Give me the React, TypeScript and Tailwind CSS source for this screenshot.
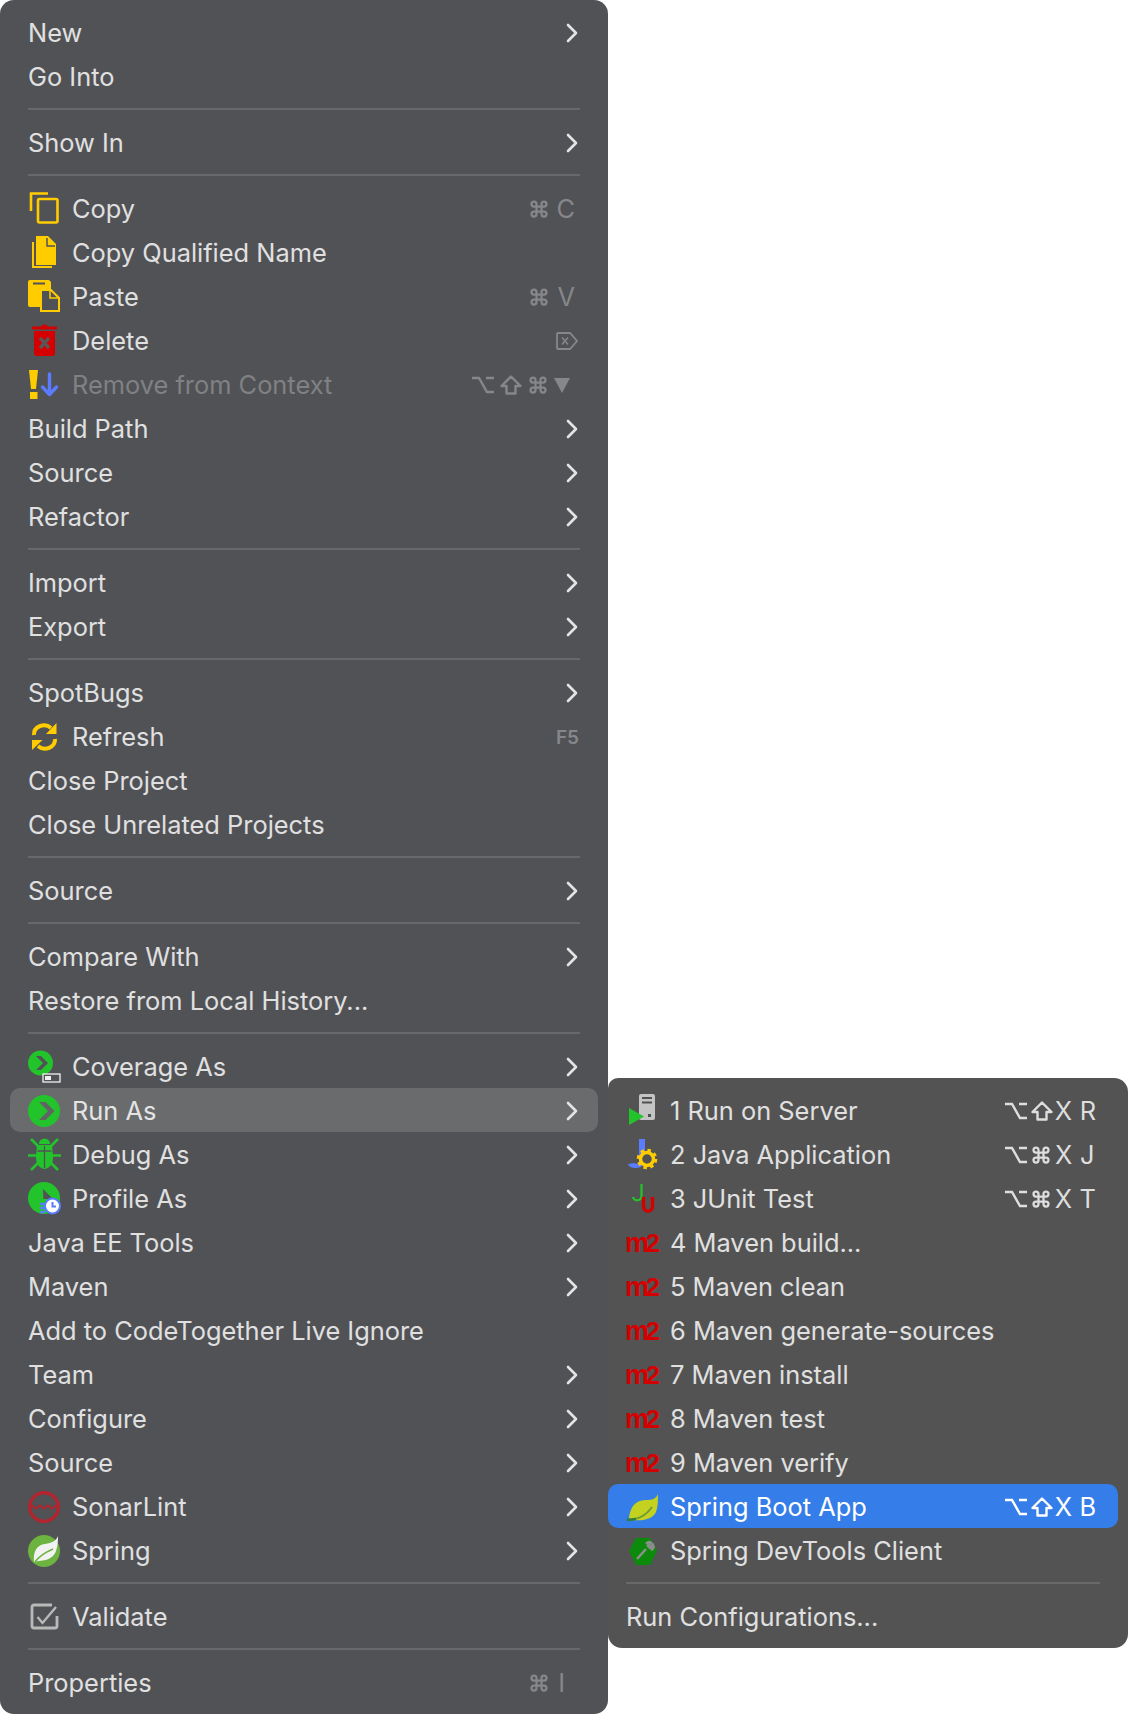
import React from "react";

type Item = {
  label: string;
  icon?: React.ReactNode;
  arrow?: boolean;
  keys?: React.ReactNode;
  disabled?: boolean;
  state?: "open" | "selected";
};

const Icon = ({ children }: { children: React.ReactNode }) => (
  <svg width="36" height="36" viewBox="0 0 36 36" className="shrink-0 overflow-visible">
    {children}
  </svg>
);

const Opt = () => (
  <svg width="22" height="20" viewBox="0 0 22 20" fill="none" stroke="currentColor" strokeWidth="2.4" className="shrink-0">
    <path d="M0 3h7l8 14h7M14 3h8" />
  </svg>
);
const Shift = () => (
  <svg width="22" height="20" viewBox="0 0 22 20" fill="none" stroke="currentColor" strokeWidth="2.4" strokeLinejoin="round" className="shrink-0">
    <path d="M11 1.500 20.500 11H15.500v7.500h-9V11H1.500Z" />
  </svg>
);
const Cmd = () => (
  <svg width="20" height="20" viewBox="0 0 24 24" fill="none" stroke="currentColor" strokeWidth="2.7" className="shrink-0">
    <path d="M15 6v12a3 3 0 1 0 3-3H6a3 3 0 1 0 3 3V6a3 3 0 1 0-3 3h12a3 3 0 1 0-3-3" />
  </svg>
);

const Chevron = () => (
  <svg width="12" height="20" viewBox="0 0 12 20" fill="none" stroke="currentColor" strokeWidth="2.6" strokeLinecap="round" strokeLinejoin="round" className="ml-auto shrink-0 text-[#e4e4e4]">
    <path d="M2 2l8 8-8 8" />
  </svg>
);

const CopyIcon = () => (
  <Icon>
    <g fill="none" stroke="#ffcc00" strokeWidth="2.6">
      <path d="M3 20V2.500h17" />
      <rect x="10" y="8" width="19.500" height="23.500" rx="1.500" />
    </g>
  </Icon>
);
const QualifiedIcon = () => (
  <Icon>
    <path d="M5 7v25h19" fill="none" stroke="#ffcc00" strokeWidth="2" />
    <path d="M8 1h12l8 8v21H8Z" fill="#ffcc00" />
    <path d="M19 3v8h8" fill="none" stroke="#515256" strokeWidth="1.500" />
  </Icon>
);
const PasteIcon = () => (
  <Icon>
    <path d="M2 1h19l2 2v25H2a2 2 0 0 1-2-2V3a2 2 0 0 1 2-2Z" fill="#ffcc00" />
    <path d="M5 4.500h12" stroke="#515256" strokeWidth="2" />
    <path d="M13 11h10l8 8v13H13Z" fill="#515256" stroke="#ffcc00" strokeWidth="2" />
    <path d="M22 11v8h9" fill="none" stroke="#ffcc00" strokeWidth="1.500" />
  </Icon>
);
const DeleteIcon = () => (
  <Icon>
    <path d="M4 3.500h9l2-2h3l2 2h9v3H4Z" fill="#d40000" />
    <path d="M6 8h21v22a3 3 0 0 1-3 3H9a3 3 0 0 1-3-3Z" fill="#d40000" />
    <path d="M12 15l9 10M21 15l-9 10" stroke="#5d5457" strokeWidth="3.400" />
  </Icon>
);
const RemoveIcon = () => (
  <Icon>
    <path d="M1 3h9l-2 19H3Z" fill="#ffcc00" />
    <rect x="2" y="25" width="7.500" height="7" fill="#ffcc00" />
    <path d="M21.500 7v20M14.500 20l7 7.500 7-7.500" fill="none" stroke="#5b7cff" strokeWidth="3.400" strokeLinecap="round" strokeLinejoin="round" />
  </Icon>
);
const RefreshIcon = () => (
  <Icon>
    <g fill="none" stroke="#ffcc00" strokeWidth="4">
      <path d="M6 16a10 9 0 0 1 17-7" />
      <path d="M27 20a10 9 0 0 1-17 7" />
    </g>
    <path d="M28.500 4v11H18Z" fill="#ffcc00" />
    <path d="M4 31V21h10.500Z" fill="#ffcc00" />
  </Icon>
);
const CoverageIcon = () => (
  <Icon>
    <circle cx="12.500" cy="14" r="12.500" fill="#23c42b" />
    <path d="M8 7h5l7 7-7 7H8l7-7Z" fill="#515256" />
    <rect x="15" y="25" width="17" height="8" fill="#515256" stroke="#fff" strokeWidth="1.200" />
    <rect x="17" y="27" width="6" height="4" fill="#f0f0f0" />
  </Icon>
);
const RunIcon = () => (
  <Icon>
    <circle cx="16" cy="18" r="16" fill="#23c42b" />
    <path d="M11 9h6.500l9 9-9 9H11l9-9Z" fill="#626365" />
  </Icon>
);
const DebugIcon = () => (
  <Icon>
    <path d="M11 7a5.500 5.500 0 0 1 11 0Z" fill="#23c42b" />
    <path d="M9 8h15l1 12c0 7-3 11-8.500 12C11 31 8 27 8 20Z" fill="#23c42b" />
    <path d="M16.500 9v22M9.500 14h14" stroke="#515256" strokeWidth="1.300" />
    <g stroke="#23c42b" strokeWidth="2.600" fill="none">
      <path d="M3 2l7 7M30 2l-7 7M0 18.500h9M33 18.500h-9M3 33l7-7M30 33l-7-7" />
    </g>
  </Icon>
);
const ProfileIcon = () => (
  <Icon>
    <circle cx="16" cy="17" r="16" fill="#23c42b" />
    <path d="M15 8l17 17-16 7Z" fill="#515256" />
    <rect x="12" y="18" width="8" height="14" fill="#23c42b" />
    <circle cx="24.500" cy="25" r="7.500" fill="#fff" stroke="#5b7cff" strokeWidth="2" />
    <path d="M24.500 21v4.500h3.500" stroke="#5b7cff" strokeWidth="2" fill="none" />
    <path d="M12 23h4M12 27h5M12 31h5" stroke="#5b7cff" strokeWidth="2.400" />
  </Icon>
);
const SonarIcon = () => (
  <Icon>
    <circle cx="16" cy="18" r="14.300" fill="none" stroke="#b3242e" strokeWidth="3.400" />
    <path d="M2 18q2-3 4 0t4 0 4 0 4 0 4 0 4 0 4 0" fill="none" stroke="#b3242e" strokeWidth="2" />
  </Icon>
);
const SpringIcon = () => (
  <Icon>
    <circle cx="16" cy="18" r="16" fill="#6db33f" />
    <path d="M30 3C28 8 24 10 17 11 9 12 5 18 6 29 12 27 24 29 28 18 30 12 30 7 30 3Z" fill="#f2f2f2" />
    <path d="M7 29c5-7 11-10 18-13" fill="none" stroke="#6db33f" strokeWidth="1.600" />
  </Icon>
);
const ValidateIcon = () => (
  <Icon>
    <path d="M24 6H6a2 2 0 0 0-2 2v19a2 2 0 0 0 2 2h21a2 2 0 0 0 2-2V17" fill="none" stroke="#b9b9b9" strokeWidth="2.800" />
    <path d="M9.500 18l5 6L28 8" fill="none" stroke="#b9b9b9" strokeWidth="2.400" />
  </Icon>
);
const ServerIcon = () => (
  <Icon>
    <rect x="13" y="1" width="16" height="26" rx="2" fill="#c4c4c4" />
    <path d="M16 5h10M16 9.500h10" stroke="#515151" strokeWidth="2" />
    <rect x="22" y="21" width="3" height="3" fill="#515151" />
    <path d="M3 15l15 8.500L3 32Z" fill="#23c42b" />
  </Icon>
);
const JavaIcon = () => (
  <Icon>
    <path d="M13 2h6v20c0 6-4 9-9 9-4 0-7-1-8-4l6-1c2 1 3 1 4 0 1-1 1-2 1-4Z" fill="#5b7cff" />
    <circle cx="21" cy="22" r="6.500" fill="#515151" stroke="#ffcc00" strokeWidth="3.500" />
    <circle cx="21" cy="22" r="9" fill="none" stroke="#ffcc00" strokeWidth="2.600" strokeDasharray="3.500 3.600" />
  </Icon>
);
const JUnitIcon = () => (
  <Icon>
    <path d="M15.500 3v12c0 5-7 6-8.500 1" fill="none" stroke="#23c42b" strokeWidth="2.200" />
    <path d="M17.500 16v9c0 7 9 7 9 0v-9" fill="none" stroke="#d40000" strokeWidth="3.400" />
  </Icon>
);
const M2 = () => (
  <span className="flex w-[36px] shrink-0 -translate-x-[1px] items-baseline font-['Liberation_Sans',sans-serif] font-bold leading-none text-[#d40000]">
    <span className="text-[27px] tracking-[-1px]">m</span>
    <span className="-ml-[2px] text-[25px]">2</span>
  </span>
);
const BootIcon = () => (
  <Icon>
    <path d="M32 5c-2 5-6 6-12 6C11 11 5 16 3 28c0 2 1 3 3 3 10 1 20 0 24-8 2-5 2-12 2-18Z" fill="#c3d11f" />
    <path d="M1 31c9 0 18-3 25-13" fill="none" stroke="#6d9a3a" strokeWidth="1.800" />
    <path d="M1 31l9-1" stroke="#2f7d3a" strokeWidth="2.400" />
  </Icon>
);
const DevToolsIcon = () => (
  <Icon>
    <path d="M10 5h14l7 13-7 14H10L3 18Z" fill="#0b8a0b" />
    <path d="M11 26l9-10M20 11c2-2 4-2 5-1l-3 3 2 2 3-3c1 2 0 4-2 5" fill="none" stroke="#8a8f8a" strokeWidth="2.600" />
  </Icon>
);

const cmdKey = (ch: string) => (
  <span className="flex w-[46px] items-center justify-between">
    <Cmd />
    <span>{ch}</span>
  </span>
);

const DeleteKey = () => (
  <svg width="22" height="18" viewBox="0 0 22 18" fill="none" stroke="currentColor" strokeWidth="1.800">
    <path d="M2 1h12l7 8-7 8H2a1 1 0 0 1-1-1V2a1 1 0 0 1 1-1Z" />
    <path d="M6 5.500l6 7M12 5.500l-6 7" strokeWidth="1.500" />
  </svg>
);

const Combo = ({ mid, ch }: { mid: "shift" | "cmd"; ch: string }) => (
  <span className="mr-[2px] flex w-[91px] items-center text-[#dedede]">
    <Opt />
    <span className="ml-[4px] w-[24px]">{mid === "shift" ? <Shift /> : <Cmd />}</span>
    <span className="w-[25px]">X</span>
    <span>{ch}</span>
  </span>
);

const main: (Item | "sep")[] = [
  { label: "New", arrow: true },
  { label: "Go Into" },
  "sep",
  { label: "Show In", arrow: true },
  "sep",
  { label: "Copy", icon: <CopyIcon />, keys: <span className="mr-[3px]">{cmdKey("C")}</span> },
  { label: "Copy Qualified Name", icon: <QualifiedIcon /> },
  { label: "Paste", icon: <PasteIcon />, keys: <span className="mr-[3px]">{cmdKey("V")}</span> },
  { label: "Delete", icon: <DeleteIcon />, keys: <DeleteKey /> },
  {
    label: "Remove from Context",
    icon: <RemoveIcon />,
    disabled: true,
    keys: (
      <span className="mr-[8px] flex items-center gap-[6px]">
        <Opt />
        <Shift />
        <Cmd />
        <svg width="16" height="16" viewBox="0 0 16 16" className="shrink-0">
          <path d="M0 1h16L8 16Z" fill="currentColor" />
        </svg>
      </span>
    ),
  },
  { label: "Build Path", arrow: true },
  { label: "Source", arrow: true },
  { label: "Refactor", arrow: true },
  "sep",
  { label: "Import", arrow: true },
  { label: "Export", arrow: true },
  "sep",
  { label: "SpotBugs", arrow: true },
  {
    label: "Refresh",
    icon: <RefreshIcon />,
    keys: <span className="mr-[-1px] mt-[3px] text-[19px] font-semibold">F5</span>,
  },
  { label: "Close Project" },
  { label: "Close Unrelated Projects" },
  "sep",
  { label: "Source", arrow: true },
  "sep",
  { label: "Compare With", arrow: true },
  { label: "Restore from Local History..." },
  "sep",
  { label: "Coverage As", icon: <CoverageIcon />, arrow: true },
  { label: "Run As", icon: <RunIcon />, arrow: true, state: "open" },
  { label: "Debug As", icon: <DebugIcon />, arrow: true },
  { label: "Profile As", icon: <ProfileIcon />, arrow: true },
  { label: "Java EE Tools", arrow: true },
  { label: "Maven", arrow: true },
  { label: "Add to CodeTogether Live Ignore" },
  { label: "Team", arrow: true },
  { label: "Configure", arrow: true },
  { label: "Source", arrow: true },
  { label: "SonarLint", icon: <SonarIcon />, arrow: true },
  { label: "Spring", icon: <SpringIcon />, arrow: true },
  "sep",
  { label: "Validate", icon: <ValidateIcon /> },
  "sep",
  {
    label: "Properties",
    keys: (
      <span className="mr-[13px] flex w-[36px] items-center justify-between">
        <Cmd />
        <span>I</span>
      </span>
    ),
  },
];

const sub: (Item | "sep")[] = [
  { label: "1 Run on Server", icon: <ServerIcon />, keys: <Combo mid="shift" ch="R" /> },
  { label: "2 Java Application", icon: <JavaIcon />, keys: <Combo mid="cmd" ch="J" /> },
  { label: "3 JUnit Test", icon: <JUnitIcon />, keys: <Combo mid="cmd" ch="T" /> },
  { label: "4 Maven build...", icon: <M2 /> },
  { label: "5 Maven clean", icon: <M2 /> },
  { label: "6 Maven generate-sources", icon: <M2 /> },
  { label: "7 Maven install", icon: <M2 /> },
  { label: "8 Maven test", icon: <M2 /> },
  { label: "9 Maven verify", icon: <M2 /> },
  { label: "Spring Boot App", icon: <BootIcon />, keys: <Combo mid="shift" ch="B" />, state: "selected" },
  { label: "Spring DevTools Client", icon: <DevToolsIcon /> },
  "sep",
  { label: "Run Configurations..." },
];

const Row = ({ item }: { item: Item }) => {
  let tone = "text-[#e0e0e0]";
  if (item.disabled) tone = "text-[#808184]";
  if (item.state === "selected") tone = "bg-[#357de8] text-white";
  if (item.state === "open") tone = "bg-[#6a6b6d] text-[#e4e4e4]";
  return (
    <div className={`flex h-[44px] items-center rounded-[10px] pl-[18px] pr-[20px] pt-[2px] ${tone}`}>
      {item.icon && <span className="mr-[8px] flex w-[36px] shrink-0 items-center">{item.icon}</span>}
      <span className="whitespace-nowrap">{item.label}</span>
      {item.arrow && <Chevron />}
      {item.keys && (
        <span className={`ml-auto flex items-center ${item.state === "selected" ? "[&>span]:text-white" : "text-[#86878a]"}`}>
          {item.keys}
        </span>
      )}
    </div>
  );
};

const Menu = ({ items }: { items: (Item | "sep")[] }) => (
  <>
    {items.map((item, i) =>
      item === "sep" ? (
        <div key={i} className="flex h-[22px] items-center px-[18px]">
          <div className="h-[2px] w-full bg-[#68696b]" />
        </div>
      ) : (
        <Row key={i} item={item} />
      ),
    )}
  </>
);

export default function App() {
  return (
    <div className="flex h-[1714px] w-[1128px] items-start overflow-hidden bg-white font-['Inter','Liberation_Sans',sans-serif] text-[25.4px]">
      <div className="h-[1714px] w-[608px] shrink-0 rounded-[14px] bg-[#515256] px-[10px] pb-[10px] pt-[10px]">
        <Menu items={main} />
      </div>
      <div className="mt-[1078px] w-[520px] shrink-0 rounded-[14px] rounded-tl-[10px] bg-[#535353] pb-[10px] pl-0 pr-[10px] pt-[10px]">
        <Menu items={sub} />
      </div>
    </div>
  );
}
